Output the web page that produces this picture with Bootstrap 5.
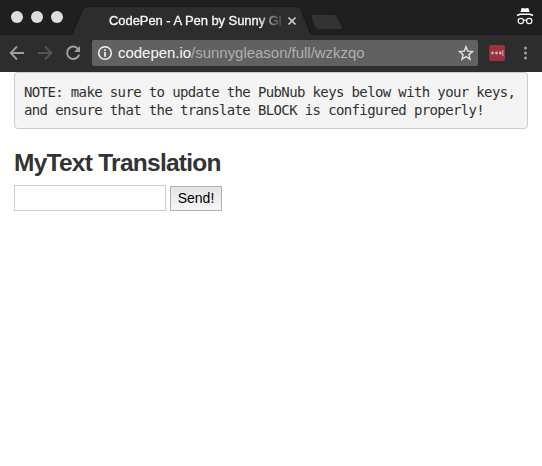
<!DOCTYPE html>
<html lang="en">
<head>
<meta charset="utf-8">
<meta name="viewport" content="width=device-width, initial-scale=1">
<title>CodePen - A Pen by Sunny Gleason</title>
<link href="https://cdn.jsdelivr.net/npm/bootstrap@5.3.0/dist/css/bootstrap.min.css" rel="stylesheet">
<style>
body { font-family: "Liberation Sans", Arial, sans-serif; height: 466px; overflow: hidden; background: #fff; }
svg { display: block; flex: none; }
.tab-strip { height: 35px; background: #1f1f1f; box-shadow: inset 0 -1px #191919; }
.lights { gap: 8px; padding: 11px 0 0 11px; width: 70px; }
.light { width: 12px; height: 12px; background: #dedede; }
.page-tab { width: 242px; height: 35px; }
.tab-shape { left: 0; top: 0; }
.tab-title { left: 39px; top: 11px; width: 178px; height: 20px; font-size: 13px; line-height: 20px; font-weight: 500; color: #f7f7f7; -webkit-text-stroke: .3px #f7f7f7; letter-spacing: -.06px;
  -webkit-mask-image: linear-gradient(90deg, #000 150px, rgba(0,0,0,.35) 166px, transparent 178px); mask-image: linear-gradient(90deg, #000 150px, rgba(0,0,0,.35) 166px, transparent 178px); }
.tab-close { left: 217px; top: 16px; }
.toolbar { height: 37px; background: #2d2d2d; padding: 0 9px 1px 9px; }
.nav-icons { gap: 12px; }
.address { width: 386px; height: 26px; margin: 0 11px; padding: 0 4px 0 5px; background: #616161; border-radius: 2px; color: #b0b0b0; }
.url { font-size: 15px; line-height: 26px; margin-left: 5px; letter-spacing: -.03px; }
.url b { color: #f8f8f8; font-weight: 400; }
.page { padding: 0 14px; }
.note { height: 57px; margin: 0; padding: 10px 9px 0 9px; background: #f4f4f4; border: 1px solid #ccc; border-radius: 4px; color: #303030; font: 14px/18px "DejaVu Sans Mono", monospace; letter-spacing: -.63px; overflow: hidden; }
.heading { margin: 19px 0 7px; font-size: 24.5px; line-height: 30px; font-weight: 700; color: #333; white-space: nowrap; letter-spacing: -.74px; }
.entry { width: 152px; height: 26px; border: 1px solid #ccc; border-radius: 0; padding: 2px 5px; font-size: 14px; }
.send { width: 52px; height: 25px; padding: 0; border: 1px solid #b0b0b0; border-radius: 0; background: linear-gradient(#e4e4e4, #f6f6f6 ); color: #000; font-size: 14px; line-height: 23px; }
</style>
<script src="https://cdn.jsdelivr.net/npm/bootstrap@5.3.0/dist/js/bootstrap.bundle.min.js"></script>
</head>
<body>
<header>
  <div class="tab-strip d-flex">
    <div class="lights d-flex"><span class="light rounded-circle"></span><span class="light rounded-circle"></span><span class="light rounded-circle"></span></div>
    <div class="page-tab position-relative">
      <svg class="tab-shape position-absolute" width="242" height="35" viewBox="0 0 242 35"><path d="M0 35Q2 35 3 32L12.500 10Q14 7 16 7H228Q230 7 231 10L240 32Q241 35 243 35Z" fill="#2d2d2d"/><path d="M1 34.500Q2 34 3 32L12.500 10Q14 6.500 16 6.500H228Q230 6.500 231 10L240 32Q241 34 242 34.500" fill="none" stroke="#171717"/></svg>
      <div class="tab-title position-absolute text-nowrap">CodePen - A Pen by Sunny Gl</div>
      <svg class="tab-close position-absolute" width="10" height="10" viewBox="0 0 10 10"><path d="M1.500 1.500 8.500 8.500M8.500 1.500 1.500 8.500" stroke="#d0d0d0" stroke-width="1.700"/></svg>
    </div>
    <svg width="34" height="35" viewBox="0 0 34 35"><path d="M0 15H21.500Q24 15 25 17L29.500 27Q30 29 28 29H6Q4.500 29 3.500 27L-1 16Z" fill="#333"/></svg>
    <svg class="ms-auto me-2" width="18" height="35" viewBox="0 0 18 35"><path d="M5.500 8.200Q7 7.800 9 8.500Q11 7.800 12.500 8.200L13.500 12H4.500Z" fill="#fff"/><path d="M1 15.500 4 14.200H14L17 15.500" fill="none" stroke="#fff" stroke-width="1.500"/><g fill="none" stroke="#f4f4f4" stroke-width="1.200"><circle cx="4.800" cy="21" r="2.700"/><circle cx="13.200" cy="21" r="2.700"/><path d="M7.400 20.600Q9 19.500 10.600 20.600"/></g></svg>
  </div>
  <div class="toolbar d-flex align-items-center">
    <div class="nav-icons d-flex">
      <svg width="16" height="16" viewBox="0 0 16 16"><path d="M15 8H2M8 1.500 1.700 8 8 14.500" fill="none" stroke="#a0a0a0" stroke-width="1.800"/></svg>
      <svg width="16" height="16" viewBox="0 0 16 16"><path d="M1 8H14M8 1.500 14.300 8 8 14.500" fill="none" stroke="#545454" stroke-width="1.800"/></svg>
      <svg width="16" height="16" viewBox="0 0 16 16"><path d="M13.400 4.200A6.200 6.200 0 1 0 14.200 9.600" fill="none" stroke="#a0a0a0" stroke-width="1.900"/><path d="M15 1V7H9Z" fill="#a0a0a0"/></svg>
    </div>
    <div class="address d-flex align-items-center flex-shrink-0">
      <svg width="16" height="16" viewBox="0 0 16 16"><circle cx="8" cy="8" r="6.300" fill="none" stroke="#f4f4f4" stroke-width="1.500"/><path d="M8 7V11.700M8 4.200V5.900" stroke="#f4f4f4" stroke-width="1.700"/></svg>
      <span class="url me-auto text-nowrap"><b>codepen.io</b>/sunnygleason/full/wzkzqo</span>
      <svg width="16" height="16" viewBox="0 0 16 16"><path d="M8 1.800 9.800 6.100 14.500 6.500 10.900 9.600 12 14.200 8 11.700 4 14.200 5.100 9.600 1.500 6.500 6.200 6.100Z" fill="none" stroke="#e0e0e0" stroke-width="1.400"/></svg>
    </div>
    <svg width="16" height="16" viewBox="0 0 16 16"><rect width="16" height="16" rx="2" fill="#9b333f"/><g fill="#d2b0b4"><circle cx="3.500" cy="8" r="1.400"/><circle cx="7.500" cy="8" r="1.400"/><circle cx="11.300" cy="8" r="1.400"/><rect x="13.300" y="5" width="1" height="6"/></g></svg>
    <svg class="ms-auto me-1" width="7" height="16" viewBox="0 0 7 16"><g fill="#a0a0a0"><circle cx="3.500" cy="3" r="1.500"/><circle cx="3.500" cy="8" r="1.500"/><circle cx="3.500" cy="13" r="1.500"/></g></svg>
  </div>
</header>
<main class="page">
  <pre class="note">NOTE: make sure to update the PubNub keys below with your keys,
and ensure that the translate BLOCK is configured properly!</pre>
  <h3 class="heading">MyText Translation</h3>
  <form class="d-flex align-items-end gap-1"><input class="entry" type="text" aria-label="Text to translate"><button class="send btn" type="button">Send!</button></form>
</main>
</body>
</html>
